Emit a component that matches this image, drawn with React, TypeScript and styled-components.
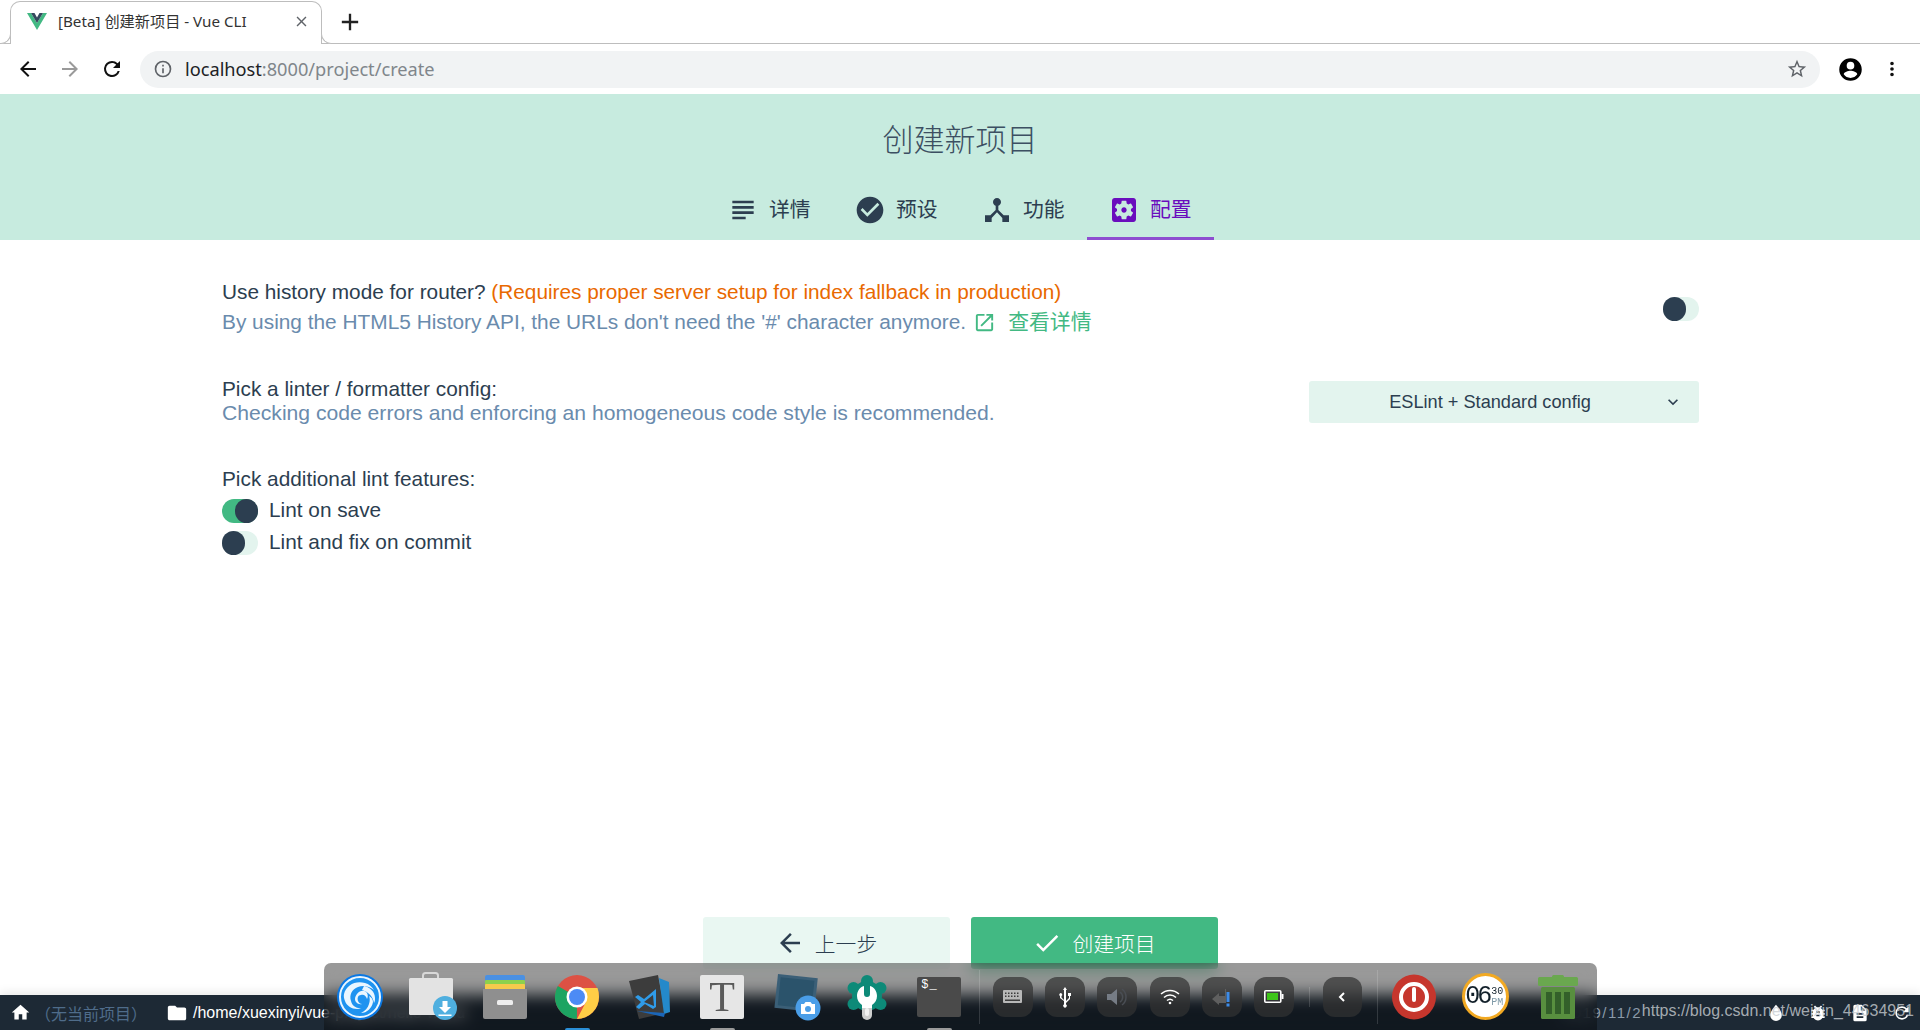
import React, { FC, ReactNode } from "react";
import styled, { createGlobalStyle } from "styled-components";

const Ico: FC<{ d: string; size?: number; color?: string }> = ({ d, size = 24, color = "currentColor" }) => (
    <svg width={size} height={size} viewBox="0 0 24 24" fill={color} style={{ display: "block", flex: "none" }}>
        <path d={d} />
    </svg>
);

const paths = {
    subject: "M14 17H4v2h10v-2zm6-8H4v2h16V9zM4 15h16v-2H4v2zM4 5v2h16V5H4z",
    check: "M12 2C6.48 2 2 6.48 2 12s4.48 10 10 10 10-4.48 10-10S17.52 2 12 2zm-2 15l-5-5 1.41-1.41L10 14.17l7.59-7.59L19 8l-9 9z",
    hub: "M17 16l-4-4V8.82C14.16 8.4 15 7.3 15 6c0-1.66-1.34-3-3-3S9 4.34 9 6c0 1.3.84 2.4 2 2.82V12l-4 4H3v5h5v-3.05l4-4.2 4 4.2V21h5v-5h-4z",
    settings:
        "M12 10c-1.1 0-2 .9-2 2s.9 2 2 2 2-.9 2-2-.9-2-2-2zm7-7H5c-1.11 0-2 .9-2 2v14c0 1.1.89 2 2 2h14c1.11 0 2-.9 2-2V5c0-1.1-.89-2-2-2zm-1.75 9c0 .23-.02.46-.05.68l1.48 1.16c.13.11.17.3.08.45l-1.4 2.42c-.09.15-.27.21-.43.15l-1.74-.7c-.36.28-.76.51-1.18.69l-.26 1.85c-.03.17-.18.3-.35.3h-2.8c-.17 0-.32-.13-.35-.29l-.26-1.85c-.43-.18-.82-.41-1.18-.69l-1.74.7c-.16.06-.34 0-.43-.15l-1.4-2.42c-.09-.15-.05-.34.08-.45l1.48-1.16c-.03-.23-.05-.46-.05-.69 0-.23.02-.46.05-.68l-1.48-1.16c-.13-.11-.17-.3-.08-.45l1.4-2.42c.09-.15.27-.21.43-.15l1.74.7c.36-.28.76-.51 1.18-.69l.26-1.85c.03-.17.18-.3.35-.3h2.8c.17 0 .32.13.35.29l.26 1.85c.43.18.82.41 1.18.69l1.74-.7c.16-.06.34 0 .43.15l1.4 2.42c.09.15.05.34-.08.45l-1.48 1.16c.03.23.05.46.05.69z",
    open: "M19 19H5V5h7V3H5c-1.11 0-2 .9-2 2v14c0 1.1.89 2 2 2h14c1.1 0 2-.9 2-2v-7h-2v7zM14 3v2h3.59l-9.83 9.83 1.41 1.41L19 6.41V10h2V3h-7z",
    back: "M20 11H7.83l5.59-5.59L12 4l-8 8 8 8 1.41-1.41L7.83 13H20v-2z",
    done: "M9 16.2L4.8 12l-1.4 1.4L9 19 21 7l-1.4-1.4L9 16.2z",
    more: "M16.59 8.59L12 13.17 7.41 8.59 6 10l6 6 6-6z",
    home: "M10 20v-6h4v6h5v-8h3L12 3 2 12h3v8z",
    folder: "M10 4H4c-1.1 0-2 .9-2 2v12c0 1.1.9 2 2 2h16c1.1 0 2-.9 2-2V8c0-1.1-.9-2-2-2h-8l-2-2z",
    reload: "M17.65 6.35A7.96 7.96 0 0 0 12 4a8 8 0 1 0 7.73 10h-2.08A6 6 0 1 1 12 6c1.66 0 3.14.69 4.22 1.78L13 11h7V4l-2.35 2.35z",
    info: "M11 7h2v2h-2V7zm0 4h2v6h-2v-6zm1-9a10 10 0 1 0 0 20 10 10 0 0 0 0-20zm0 18a8 8 0 1 1 0-16 8 8 0 0 1 0 16z",
    star: "M22 9.24l-7.19-.62L12 2 9.19 8.63 2 9.24l5.46 4.73L5.82 21 12 17.27 18.18 21l-1.63-7.03L22 9.24zM12 15.4l-3.76 2.27 1-4.28-3.32-2.88 4.38-.38L12 6.1l1.71 4.04 4.38.38-3.32 2.88 1 4.28L12 15.4z",
    account:
        "M12 2a10 10 0 1 0 0 20 10 10 0 0 0 0-20zm0 3.2a3.4 3.4 0 1 1 0 6.8 3.4 3.4 0 0 1 0-6.8zm0 14.3c-2.5 0-4.7-1.2-6-3.2 0-2 4-3.1 6-3.1s6 1.1 6 3.1c-1.3 2-3.5 3.2-6 3.2z",
    dots: "M12 8a2 2 0 1 0 0-4 2 2 0 0 0 0 4zm0 2a2 2 0 1 0 0 4 2 2 0 0 0 0-4zm0 6a2 2 0 1 0 0 4 2 2 0 0 0 0-4z",
    close: "M19 6.41L17.59 5 12 10.59 6.41 5 5 6.41 10.59 12 5 17.59 6.41 19 12 13.41 17.59 19 19 17.59 13.41 12z",
    plus: "M19 13h-6v6h-2v-6H5v-2h6V5h2v6h6v2z",
    drop: "M12 2s-7 7.5-7 12.5a7 7 0 0 0 14 0C19 9.5 12 2 12 2z",
    bug: "M20 8h-2.81a6 6 0 0 0-1.82-1.96L17 4.41 15.59 3l-2.17 2.17a6 6 0 0 0-2.83 0L8.41 3 7 4.41l1.62 1.63A6 6 0 0 0 6.81 8H4v2h2.09c-.05.33-.09.66-.09 1v1H4v2h2v1c0 .34.04.67.09 1H4v2h2.81a6 6 0 0 0 10.38 0H20v-2h-2.09c.05-.33.09-.66.09-1v-1h2v-2h-2v-1c0-.34-.04-.67-.09-1H20V8zm-6 8h-4v-2h4v2zm0-4h-4v-2h4v2z",
    doc: "M14 2H6a2 2 0 0 0-2 2v16a2 2 0 0 0 2 2h12a2 2 0 0 0 2-2V8l-6-6zm2 16H8v-2h8v2zm0-4H8v-2h8v2zm-3-5V3.5L18.5 9H13z",
};

const tabs = [
    { icon: paths.subject, label: "详情" },
    { icon: paths.check, label: "预设" },
    { icon: paths.hub, label: "功能" },
    { icon: paths.settings, label: "配置", active: true },
];

const App: FC = () => (
    <Page>
        <GlobalStyle />
        <TabStrip>
            <BrowserTab>
                <svg width="20" height="17" viewBox="0 0 20 17">
                    <path d="M0 0h4l6 10L16 0h4L10 17z" fill="#42b983" />
                    <path d="M4 0h3.5L10 4.5 12.5 0H16l-6 10z" fill="#35495e" />
                </svg>
                <TabTitle>[Beta] 创建新项目 - Vue CLI</TabTitle>
                <TabClose>
                    <Ico d={paths.close} size={17} color="#5f6368" />
                </TabClose>
            </BrowserTab>
            <NewTab>
                <Ico d={paths.plus} size={28} color="#222" />
            </NewTab>
        </TabStrip>
        <Toolbar>
            <NavBtn>
                <Ico d={paths.back} size={24} color="#111" />
            </NavBtn>
            <NavBtn>
                <ForwardIco>
                    <Ico d={paths.back} size={24} color="#9a9a9a" />
                </ForwardIco>
            </NavBtn>
            <NavBtn>
                <Ico d={paths.reload} size={24} color="#111" />
            </NavBtn>
            <AddressBar>
                <Ico d={paths.info} size={20} color="#5f6368" />
                <Url>
                    localhost<UrlRest>:8000/project/create</UrlRest>
                </Url>
                <Ico d={paths.star} size={22} color="#5f6368" />
            </AddressBar>
            <Account>
                <Ico d={paths.account} size={27} color="#000" />
            </Account>
            <NavBtn>
                <Ico d={paths.dots} size={22} color="#111" />
            </NavBtn>
        </Toolbar>

        <Header>
            <Title>创建新项目</Title>
            <StepTabs>
                {tabs.map((t) => (
                    <Step key={t.label} $active={t.active}>
                        <Ico d={t.icon} size={32} />
                        <StepLabel>{t.label}</StepLabel>
                    </Step>
                ))}
            </StepTabs>
        </Header>

        <Content>
            <PromptRow>
                <div>
                    <Question>
                        Use history mode for router?{" "}
                        <Warning>(Requires proper server setup for index fallback in production)</Warning>
                    </Question>
                    <Description>
                        By using the HTML5 History API, the URLs don't need the '#' character anymore.
                        <MoreLink>
                            <Ico d={paths.open} size={23} />
                            查看详情
                        </MoreLink>
                    </Description>
                </div>
                <RowToggle />
            </PromptRow>
            <ConfigRow>
                <div>
                    <ConfigLabel>Pick a linter / formatter config:</ConfigLabel>
                    <ConfigHint>Checking code errors and enforcing an homogeneous code style is recommended.</ConfigHint>
                </div>
                <Select>
                    <span>ESLint + Standard config</span>
                    <Ico d={paths.more} size={20} color="#2c3e50" />
                </Select>
            </ConfigRow>
            <FeatureLabel>Pick additional lint features:</FeatureLabel>
            <FeatureRow>
                <Toggle $on />
                Lint on save
            </FeatureRow>
            <FeatureRow>
                <Toggle />
                Lint and fix on commit
            </FeatureRow>
        </Content>

        <Actions>
            <ActionButton>
                <Ico d={paths.back} size={30} />
                上一步
            </ActionButton>
            <ActionButton $primary>
                <Ico d={paths.done} size={30} />
                创建项目
            </ActionButton>
        </Actions>

        <StatusBar>
            <StatusGroup>
                <Ico d={paths.home} size={21} color="#fff" />
                <NoProject>（无当前项目）</NoProject>
                <Ico d={paths.folder} size={22} color="#fff" />
                <PathText>/home/xuexinyi/vue-project/hello-world</PathText>
            </StatusGroup>
            <StatusRight>
                <DateText>2019/11/2</DateText>
                <Ico d={paths.drop} size={20} color="#fff" />
                <Ico d={paths.bug} size={20} color="#fff" />
                <Ico d={paths.doc} size={20} color="#fff" />
                <Ico d={paths.reload} size={20} color="#fff" />
            </StatusRight>
            <Watermark>https://blog.csdn.net/weixin_44634951</Watermark>
        </StatusBar>

        <Dock>
            <AppSlot><DeepinIcon /></AppSlot>
            <AppSlot><StoreIcon /></AppSlot>
            <AppSlot><FilesIcon /></AppSlot>
            <AppSlot $running="#2a8fd8"><ChromeIcon /></AppSlot>
            <AppSlot><CodeIcon /></AppSlot>
            <AppSlot $running="#9a9a9a"><FontTile>T</FontTile></AppSlot>
            <AppSlot><ShotIcon /></AppSlot>
            <AppSlot><WrenchIcon /></AppSlot>
            <AppSlot $running="#9a9a9a"><TerminalIcon /></AppSlot>
            <DockSep $left={3} $right={13} />
            <Tile><KeyboardIcon /></Tile>
            <Tile><UsbIcon /></Tile>
            <Tile><SpeakerIcon /></Tile>
            <Tile><WifiIcon /></Tile>
            <Tile><NetIcon /></Tile>
            <Tile><BatteryIcon /></Tile>
            <DockSep $left={2} $right={13} $short />
            <ChevronTile>
                <svg width="12" height="14" viewBox="0 0 12 14" fill="none" stroke="#fff" strokeWidth="2">
                    <path d="M8 3L4 7l4 4" />
                </svg>
            </ChevronTile>
            <DockSep $left={15} $right={0} />
            <AppSlot $w={72}><PowerIcon /></AppSlot>
            <AppSlot $w={72}><ClockIcon /></AppSlot>
            <AppSlot $w={72}><TrashIcon /></AppSlot>
        </Dock>
    </Page>
);

export default App;

const Svg: FC<{ w: number; h: number; children: ReactNode }> = ({ w, h, children }) => (
    <svg width={w} height={h} viewBox={`0 0 ${w} ${h}`} style={{ display: "block", overflow: "visible" }}>
        {children}
    </svg>
);

const DeepinIcon: FC = () => (
    <Svg w={46} h={46}>
        <circle cx="23" cy="23" r="23" fill="#0b78e3" />
        <circle cx="23" cy="23" r="20" fill="#1f93f0" stroke="#eaf6ff" strokeWidth="2" />
        <path d="M7 20c2-9 12-14 21-11 4 1 7 4 9 7-5-4-11-5-16-3-6 2-9 8-7 14 1 5 6 8 11 7-7 3-15-1-17-7-1-2-1.500-5-1-7z" fill="#eaf6ff" />
        <path d="M27 12c6 1 11 6 11 12 0 2 0 3-1 5-1-6-5-11-12-13z" fill="#eaf6ff" />
        <path d="M36 28c-1 6-6 11-12 11 4-2 7-5 8-9 1-3 1-6 0-8 2 1 4 3 4 6z" fill="#eaf6ff" />
        <path d="M20 20c3-4 8-4 10-1 1 2 1 4 0 6-1-3-3-5-6-4-3 0-4 3-3 6 1 2 2 3 4 3-4 1-7-2-7-5 0-2 1-4 2-5z" fill="#eaf6ff" />
    </Svg>
);

const StoreIcon: FC = () => (
    <Svg w={48} h={50}>
        <path d="M14 7V3.5C14 2 15 1 16.5 1h10C28 1 29 2 29 3.5V7" fill="none" stroke="#d8d8d8" strokeWidth="2" />
        <rect x="0" y="6" width="44" height="37" rx="1.5" fill="#e3e3e3" />
        <circle cx="36" cy="36" r="12" fill="#4fafdf" />
        <path d="M33.5 29h5v6h3.5l-6 6-6-6h3.5z M29.5 42.5h13v1.6h-13z" fill="#fff" />
    </Svg>
);

const FilesIcon: FC = () => (
    <Svg w={44} h={44}>
        <rect x="2" y="0" width="40" height="9" rx="2" fill="#4a90e2" />
        <rect x="2" y="5" width="40" height="9" rx="1" fill="#8dd14d" />
        <rect x="2" y="9" width="40" height="9" rx="1" fill="#f6ca4c" />
        <path d="M0 14h44v28a2 2 0 0 1-2 2H2a2 2 0 0 1-2-2z" fill="#8f8f8f" />
        <rect x="14" y="25" width="16" height="5" rx="1.5" fill="#eee" />
    </Svg>
);

const ChromeIcon: FC = () => (
    <Svg w={44} h={44}>
        <circle cx="22" cy="22" r="22" fill="#dd5144" />
        <path d="M22 22L2.9 11a22 22 0 0 0 19 33z" fill="#1da462" />
        <path d="M22 13h20.500A22 22 0 0 1 44 22a22 22 0 0 1-22 22l9-17z" fill="#ffcd46" />
        <circle cx="22" cy="22" r="10.500" fill="#fff" />
        <circle cx="22" cy="22" r="8" fill="#4c8bf5" />
    </Svg>
);

const CodeIcon: FC = () => (
    <Svg w={42} h={44}>
        <path d="M0 6l29-6 7 38-26 6z" fill="#3c3c3c" />
        <path d="M30 3l10 4 1 30-6 2z" fill="#2489ca" />
        <path d="M27 14L15 24l-6-4-3 2 6 5-5 5 3 2 6-5 8 5 3-2zM15 27l9-7 1 11z" fill="#2f9be8" fillRule="evenodd" />
        <path d="M8 36l28 2-1 4z" fill="#1b66b8" />
    </Svg>
);

const ShotIcon: FC = () => (
    <Svg w={42} h={46}>
        <g transform="rotate(6 22 20)">
            <rect x="2" y="2" width="40" height="34" fill="#3b5f77" />
            <rect x="5" y="5" width="34" height="28" fill="#2b536b" />
        </g>
        <circle cx="34" cy="34" r="12.500" fill="#4a9ee8" />
        <path d="M27 30h3l1.500-2h5l1.500 2h3v10H27z" fill="#fff" />
        <circle cx="34" cy="35" r="3" fill="#4a9ee8" />
    </Svg>
);

const WrenchIcon: FC = () => (
    <Svg w={40} h={44}>
        <g fill="#0d8a78">
            <circle cx="20" cy="21" r="15" />
            <circle cx="20" cy="6" r="6" />
            <circle cx="6.500" cy="13" r="6" />
            <circle cx="33.500" cy="13" r="6" />
            <circle cx="6.500" cy="29" r="6" />
            <circle cx="33.500" cy="29" r="6" />
        </g>
        <path d="M17 11v8a3 3 0 0 0 6 0v-8c4 1 7 5 7 10 0 4-2 7-5 9v5H15v-5c-3-2-5-5-5-9 0-5 3-9 7-10z" fill="#fff" />
        <path d="M15 33h10v7a5 5 0 0 1-10 0z" fill="#cfcfcf" />
        <rect x="18" y="33" width="4" height="8" rx="2" fill="#f2f2f2" />
    </Svg>
);

const TerminalIcon: FC = () => (
    <TerminalBox>
        <TerminalText>$_</TerminalText>
    </TerminalBox>
);

const KeyboardIcon: FC = () => (
    <Svg w={19} h={13}>
        <rect width="19" height="13" rx="1" fill="#b8b8b8" />
        <path d="M2 2.500h1.500V4H2zM5 2.500h1.500V4H5zM8 2.500h1.500V4H8zM11 2.500h1.500V4H11zM14 2.500h1.500V4H14zM2 5.500h1.500V7H2zM5 5.500h1.500V7H5zM8 5.500h1.500V7H8zM11 5.500h1.500V7H11zM14 5.500h1.500V7H14zM2 9.500h15V11H2z" fill="#3c3c3c" />
    </Svg>
);

const UsbIcon: FC = () => (
    <Svg w={14} h={20}>
        <path d="M7 0l2 3H8v11l3-3V9h-1V6h3v3h-1v3l-4 4v1.200a1.800 1.800 0 1 1-2 0V14L2 11V9a1.500 1.500 0 1 1 1.500 0v1.500L6 13V3H5z" fill="#fff" />
    </Svg>
);

const SpeakerIcon: FC = () => (
    <Svg w={20} h={20}>
        <path d="M0 7h4l6-5v16l-6-5H0z" fill="#767c85" />
        <path d="M13 5a6 6 0 0 1 0 10M15 2a10 10 0 0 1 0 16" fill="none" stroke="#4a4e54" strokeWidth="1.500" />
    </Svg>
);

const WifiIcon: FC = () => (
    <Svg w={20} h={15}>
        <g fill="none" stroke="#fff" strokeWidth="1.500">
            <path d="M1 5a13 13 0 0 1 18 0M4 8.500a8.500 8.500 0 0 1 12 0M7 11.500a4.500 4.500 0 0 1 6 0" />
        </g>
        <circle cx="10" cy="14" r="1.300" fill="#fff" />
    </Svg>
);

const NetIcon: FC = () => (
    <Svg w={20} h={20}>
        <path d="M0 12l7-6v3h6V2l1 0v14h-7v2z" fill="#5f5f5f" />
        <rect x="14.500" y="5" width="3" height="10" fill="#3d8be8" />
        <rect x="14.500" y="16.500" width="3" height="3" fill="#3d8be8" />
    </Svg>
);

const BatteryIcon: FC = () => (
    <Svg w={20} h={13}>
        <rect x=".8" y=".8" width="16" height="11.400" rx="1" fill="none" stroke="#fff" strokeWidth="1.600" />
        <rect x="3" y="3" width="11" height="7" fill="#3ec41a" />
        <rect x="17.500" y="4" width="2" height="5" fill="#fff" />
    </Svg>
);

const PowerIcon: FC = () => (
    <Svg w={44} h={46}>
        <ellipse cx="22" cy="23" rx="22" ry="22.500" fill="#c6362d" />
        <circle cx="22" cy="23" r="13" fill="none" stroke="#fff" strokeWidth="4" />
        <rect x="20" y="13" width="4" height="15" rx="2" fill="#fff" />
    </Svg>
);

const ClockIcon: FC = () => (
    <ClockFace>
        <ClockBig>06</ClockBig>
        <ClockSmall>
            <span>30</span>
            <ClockPm>PM</ClockPm>
        </ClockSmall>
    </ClockFace>
);

const TrashIcon: FC = () => (
    <Svg w={40} h={44}>
        <rect x="14" y="0" width="12" height="4" rx="1.500" fill="#6aa84f" />
        <rect x="0" y="2" width="40" height="9" rx="1.500" fill="#6aa84f" />
        <rect x="3" y="12" width="34" height="32" rx="1.500" fill="#588f3f" />
        <path d="M8 17h6v22H8zM17 17h6v22h-6zM26 17h6v22h-6z" fill="#33602a" />
    </Svg>
);

const uiFont = `"Liberation Sans", "Noto Sans CJK SC", sans-serif`;
const chromeFont = `"Noto Sans", "Noto Sans CJK SC", sans-serif`;

const GlobalStyle = createGlobalStyle`
  html, body {
    margin: 0;
    padding: 0;
    background: #fff;
  }
  * {
    box-sizing: border-box;
  }
`;

const Page = styled.div`
  position: relative;
  height: 100vh;
  display: flex;
  flex-direction: column;
  overflow: hidden;
  font-family: ${uiFont};
  color: #2c3e50;
`;

const TabStrip = styled.div`
  height: 44px;
  flex: none;
  padding: 1px 0 0 10px;
  display: flex;
  border-bottom: 1px solid #bdbdbd;
`;

const BrowserTab = styled.div`
  position: relative;
  width: 312px;
  height: 43px;
  padding: 0 11px 4px 16px;
  display: flex;
  align-items: center;
  background: #fff;
  border: 1px solid #bdbdbd;
  border-bottom: none;
  border-radius: 10px 10px 0 0;
  &::before,
  &::after {
    content: "";
    position: absolute;
    bottom: 0;
    width: 10px;
    height: 10px;
    background: #fff;
    border-bottom: 1px solid #bdbdbd;
  }
  &::before {
    left: -11px;
    border-right: 1px solid #bdbdbd;
    border-bottom-right-radius: 10px;
  }
  &::after {
    right: -11px;
    border-left: 1px solid #bdbdbd;
    border-bottom-left-radius: 10px;
  }
`;

const TabTitle = styled.span`
  flex: 1;
  margin: -2px 0 0 11px;
  font: 15.2px ${chromeFont};
  color: #333;
  white-space: nowrap;
`;

const TabClose = styled.span`
  display: flex;
`;

const NewTab = styled.div`
  margin-left: 14px;
  display: flex;
  align-items: center;
`;

const Toolbar = styled.div`
  height: 50px;
  flex: none;
  padding: 0 7px;
  display: flex;
  align-items: center;
`;

const NavBtn = styled.div`
  width: 42px;
  display: flex;
  justify-content: center;
`;

const ForwardIco = styled.div`
  transform: scaleX(-1);
`;

const AddressBar = styled.div`
  flex: 1;
  height: 37px;
  margin-left: 7px;
  padding: 0 12px 0 13px;
  display: flex;
  align-items: center;
  background: #f1f3f4;
  border-radius: 19px;
`;

const Url = styled.div`
  flex: 1;
  margin-left: 12px;
  font: 18.2px ${chromeFont};
  color: #202124;
`;

const UrlRest = styled.span`
  color: #80868b;
`;

const Account = styled.div`
  width: 51px;
  padding-left: 10px;
  display: flex;
  justify-content: center;
`;

const Header = styled.div`
  height: 146px;
  flex: none;
  display: flex;
  flex-direction: column;
  align-items: center;
  background: #c7ebdf;
`;

const Title = styled.div`
  margin-top: 27px;
  font-size: 31px;
  font-weight: 300;
  line-height: 40px;
  color: #3c4f62;
`;

const StepTabs = styled.div`
  margin-top: 23px;
  display: flex;
`;

const Step = styled.div<{ $active?: boolean }>`
  width: 127px;
  height: 56px;
  padding: 0 0 2px 21px;
  display: flex;
  align-items: center;
  gap: 10px;
  font-size: 20.8px;
  color: ${(p) => (p.$active ? "#6a0dbd" : "#2c3e50")};
  border-bottom: 3px solid ${(p) => (p.$active ? "#8e4dd0" : "transparent")};
`;

const StepLabel = styled.span`
  margin-top: -3px;
`;

const Content = styled.div`
  flex: 1;
  padding: 37px 221px 0 222px;
  font-size: 20.8px;
`;

const PromptRow = styled.div`
  display: flex;
  justify-content: space-between;
  align-items: center;
  line-height: 30px;
`;

const Question = styled.div`
  color: #2c3e50;
`;

const Warning = styled.span`
  color: #e96900;
`;

const Description = styled.div`
  font-size: 20.85px;
  color: #6a8bad;
`;

const MoreLink = styled.span`
  display: inline-flex;
  align-items: center;
  gap: 12px;
  margin-left: 7px;
  vertical-align: top;
  height: 30px;
  color: #42b983;
`;

const Toggle = styled.div<{ $on?: boolean }>`
  position: relative;
  width: 36px;
  height: 24px;
  flex: none;
  margin-top: 1px;
  background: ${(p) => (p.$on ? "#42b983" : "#e3f4ee")};
  border-radius: 12px;
  &::after {
    content: "";
    position: absolute;
    top: 0;
    bottom: 0;
    ${(p) => (p.$on ? "right: 0;" : "left: 0;")}
    width: 23px;
    background: #2c3e50;
    border-radius: 12px;
  }
`;

const RowToggle = styled(Toggle)`
  margin-top: 4px;
`;

const ConfigRow = styled.div`
  margin-top: 40px;
  display: flex;
  justify-content: space-between;
  align-items: center;
  line-height: 24px;
`;

const ConfigLabel = styled.div``;

const ConfigHint = styled.div`
  font-size: 21.13px;
  color: #6a8bad;
`;

const Select = styled.div`
  width: 390px;
  height: 42px;
  margin-top: 2px;
  padding: 0 16px 0 8px;
  display: flex;
  align-items: center;
  background: #e3f4ee;
  border-radius: 3px;
  font-size: 18.2px;
  span {
    flex: 1;
    text-align: center;
  }
`;

const FeatureLabel = styled.div`
  margin-top: 42px;
  margin-bottom: 3px;
  line-height: 24px;
`;

const FeatureRow = styled.div`
  height: 32px;
  display: flex;
  align-items: center;
  gap: 11px;
`;

const Actions = styled.div`
  flex: none;
  padding-bottom: 26px;
  display: flex;
  justify-content: center;
  gap: 21px;
`;

const ActionButton = styled.div<{ $primary?: boolean }>`
  width: 247px;
  height: 52px;
  display: flex;
  align-items: center;
  justify-content: center;
  gap: 10px;
  font-size: 20.8px;
  font-weight: 300;
  border-radius: 3px;
  background: ${(p) => (p.$primary ? "#42b983" : "#e9f7f2")};
  color: ${(p) => (p.$primary ? "#fff" : "#2c3e50")};
`;

const StatusBar = styled.div`
  position: relative;
  height: 35px;
  flex: none;
  padding: 0 0 0 10px;
  display: flex;
  justify-content: space-between;
  align-items: center;
  background: #1d2935;
  box-shadow: 0 -2px 10px rgba(0, 0, 0, 0.1);
  font-size: 16px;
  color: #fff;
`;

const StatusGroup = styled.div`
  display: flex;
  align-items: center;
`;

const NoProject = styled.span`
  margin: 0 19px 0 4px;
  color: #4f6c8a;
`;

const PathText = styled.span`
  margin-left: 5px;
`;

const StatusRight = styled.div`
  display: flex;
  align-items: center;
  gap: 22px;
  padding-right: 8px;
`;

const DateText = styled.span`
  margin-right: 102px;
  font-size: 15px;
  letter-spacing: 1.5px;
  color: #8b9aa9;
`;

const Watermark = styled.div`
  position: absolute;
  right: 6px;
  top: 7px;
  font-size: 16px;
  color: rgba(200, 205, 210, 0.8);
`;

const Dock = styled.div`
  position: absolute;
  left: 324px;
  bottom: 0;
  width: 1273px;
  height: 67px;
  display: flex;
  align-items: center;
  background: rgba(0, 0, 0, 0.4);
  backdrop-filter: blur(8px);
  border-radius: 7px 7px 0 0;
`;

const AppSlot = styled.div<{ $w?: number; $running?: string }>`
  position: relative;
  width: ${(p) => p.$w ?? 72.4}px;
  height: 100%;
  flex: none;
  display: flex;
  align-items: center;
  justify-content: center;
  &::after {
    content: "";
    display: ${(p) => (p.$running ? "block" : "none")};
    position: absolute;
    left: 50%;
    bottom: 0;
    width: 25px;
    height: 2px;
    margin-left: -12px;
    background: ${(p) => p.$running};
    border-radius: 2px 2px 0 0;
  }
`;

const DockSep = styled.div<{ $left: number; $right: number; $short?: boolean }>`
  width: 1px;
  height: ${(p) => (p.$short ? 20 : 54)}px;
  flex: none;
  margin: 0 ${(p) => p.$right}px 0 ${(p) => p.$left}px;
  background: rgba(255, 255, 255, 0.14);
`;

const Tile = styled.div`
  width: 40px;
  height: 40px;
  margin-right: 12.4px;
  flex: none;
  display: flex;
  align-items: center;
  justify-content: center;
  background: rgba(50, 50, 50, 0.72);
  border-radius: 12px;
`;

const ChevronTile = styled(Tile)`
  width: 39px;
  margin-right: 0;
`;

const FontTile = styled.div`
  width: 44px;
  height: 44px;
  display: flex;
  align-items: center;
  justify-content: center;
  font: 42px/44px "Liberation Serif", serif;
  color: #5a5a5a;
  background: #e6e6e6;
  border-radius: 2px;
`;

const TerminalBox = styled.div`
  width: 44px;
  height: 40px;
  padding: 1px 4px;
  background: #4a4a4a;
  border-radius: 2px;
`;

const TerminalText = styled.div`
  font: 12px "Liberation Mono", monospace;
  color: #fff;
  letter-spacing: 1px;
`;

const ClockFace = styled.div`
  width: 47px;
  height: 47px;
  display: flex;
  align-items: center;
  justify-content: center;
  gap: 2px;
  background: #fff;
  border: 3px solid #f2a922;
  border-radius: 50%;
  color: #12202a;
`;

const ClockBig = styled.div`
  font: 25px "Liberation Mono", monospace;
  letter-spacing: -3px;
  margin-left: -3px;
`;

const ClockSmall = styled.div`
  display: flex;
  flex-direction: column;
  align-items: center;
  font: 10px/11px "Liberation Mono", monospace;
`;

const ClockPm = styled.span`
  color: #7f9aa8;
`;
